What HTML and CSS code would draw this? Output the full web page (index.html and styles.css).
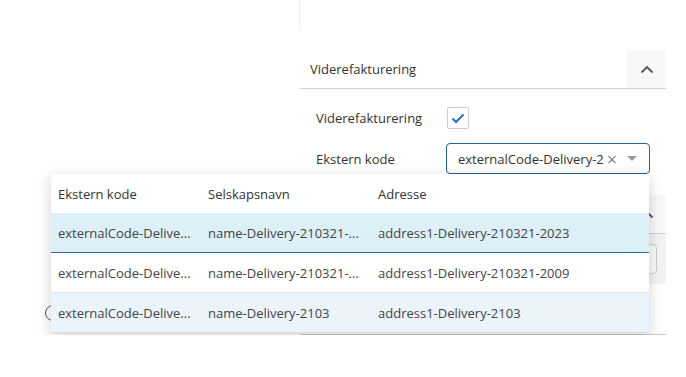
FILE: index.html
```html
<!DOCTYPE html>
<html lang="no">
<head>
    <meta charset="UTF-8">
    <title>Viderefakturering</title>
    <link rel="stylesheet" href="styles.css">
</head>
<body>
    <div class="page">
        <div class="venstre">
            <label class="radio"><span class="sirkel"></span></label>
        </div>

        <div class="hoyre">
            <div class="topp"></div>

            <div class="seksjon">
                <div class="seksjon-hode">
                    <span class="tittel">Viderefakturering</span>
                    <button class="kollaps" type="button">
                        <svg width="14" height="9" viewBox="0 0 14 9"><path d="M1.5 7.5 L7 2 L12.5 7.5" fill="none" stroke="#555" stroke-width="1.8"/></svg>
                    </button>
                </div>
                <div class="skjema">
                    <div class="rad">
                        <label>Viderefakturering</label>
                        <span class="avkrysning">
                            <svg width="14" height="11" viewBox="0 0 14 11"><path d="M1.5 5.5 L5 9 L12.5 1.5" fill="none" stroke="#2d6fb7" stroke-width="2"/></svg>
                        </span>
                    </div>
                    <div class="rad">
                        <label>Ekstern kode</label>
                        <div class="velger">
                            <span class="verdi">externalCode-Delivery-2</span>
                            <span class="fjern">&times;</span>
                            <span class="pil"></span>

                            <div class="nedtrekk">
                                <table>
                                    <thead>
                                        <tr>
                                            <th class="k1">Ekstern kode</th>
                                            <th class="k2">Selskapsnavn</th>
                                            <th>Adresse</th>
                                        </tr>
                                    </thead>
                                    <tbody>
                                        <tr class="valgt">
                                            <td>externalCode-Delive...</td>
                                            <td>name-Delivery-210321-...</td>
                                            <td>address1-Delivery-210321-2023</td>
                                        </tr>
                                        <tr>
                                            <td>externalCode-Delive...</td>
                                            <td>name-Delivery-210321-...</td>
                                            <td>address1-Delivery-210321-2009</td>
                                        </tr>
                                        <tr class="markert">
                                            <td>externalCode-Delive...</td>
                                            <td>name-Delivery-2103</td>
                                            <td>address1-Delivery-2103</td>
                                        </tr>
                                    </tbody>
                                </table>
                            </div>
                        </div>
                    </div>
                </div>
            </div>

            <div class="seksjon deaktivert">
                <div class="seksjon-hode">
                    <span class="tittel">Levering</span>
                    <button class="kollaps" type="button">
                        <svg width="14" height="9" viewBox="0 0 14 9"><path d="M1.5 7.5 L7 2 L12.5 7.5" fill="none" stroke="#555" stroke-width="1.8"/></svg>
                    </button>
                </div>
                <div class="skjema-felt">
                    <input type="text" class="felt">
                </div>
            </div>

            <div class="seksjon">
                <div class="seksjon-hode tom"></div>
            </div>
        </div>
    </div>
</body>
</html>
```

FILE: styles.css
```css
body {
    margin: 0;
    font-family: 'Open Sans', 'DejaVu Sans', sans-serif;
    font-size: 13px;
    color: #333;
    background-color: #fff;
}

.page {
    display: flex;
    width: 686px;
}

.venstre {
    width: 299px;
    padding-top: 305px;
    padding-left: 45px;
    box-sizing: border-box;
}

.radio .sirkel {
    display: block;
    width: 14px;
    height: 14px;
    border: 1px solid #555;
    border-radius: 50%;
}

.hoyre {
    width: 367px;
}

.topp {
    height: 30px;
    border-left: 1px solid #eee;
}

.seksjon {
    margin-left: 1px;
    margin-top: 20px;
}

.seksjon-hode {
    display: flex;
    align-items: center;
    justify-content: space-between;
    height: 38px;
    border-bottom: 1px solid #d3d3d3;
}

.seksjon-hode.tom {
    height: 37px;
    border-bottom-color: #ccc;
}

.tittel {
    padding-left: 10px;
    color: #333;
}

.kollaps {
    width: 39px;
    height: 38px;
    border: none;
    background-color: #f8f8f8;
    display: flex;
    align-items: center;
    justify-content: center;
    padding: 0;
}

.skjema {
    padding: 18px 16px 0 16px;
}

.rad {
    display: flex;
    align-items: center;
    margin-bottom: 14px;
}

.rad:last-child {
    margin-bottom: 0;
}

.rad label {
    width: 130px;
    color: #333;
}

.avkrysning {
    width: 20px;
    height: 20px;
    margin-left: 1px;
    border: 1px solid #ccc;
    border-radius: 2px;
    display: flex;
    align-items: center;
    justify-content: center;
}

.velger {
    position: relative;
    width: 204px;
    height: 31px;
    box-sizing: border-box;
    border: 1px solid #21609e;
    border-radius: 4px;
    display: flex;
    align-items: center;
    padding-left: 11px;
}

.verdi {
    color: #333;
    white-space: nowrap;
}

.fjern {
    color: #888;
    font-size: 18px;
    margin-left: 3px;
    line-height: 1;
}

.pil {
    margin-left: 10px;
    width: 0;
    height: 0;
    border-left: 5px solid transparent;
    border-right: 5px solid transparent;
    border-top: 5px solid #999;
}

.nedtrekk {
    position: absolute;
    top: 30px;
    right: 0;
    width: 598px;
    background-color: #fff;
    box-shadow: 0 4px 14px rgba(0, 0, 0, 0.18);
    z-index: 10;
}

.nedtrekk table {
    width: 100%;
    border-collapse: collapse;
}

.nedtrekk th,
.nedtrekk td {
    text-align: left;
    font-weight: normal;
    padding: 0 0 0 7px;
    white-space: nowrap;
}

.nedtrekk th {
    height: 39px;
    color: #333;
}

.nedtrekk td {
    height: 39px;
    color: #444;
    border-bottom: 1px solid #e6e6e6;
}

.nedtrekk .k1 {
    width: 143px;
}

.nedtrekk .k2 {
    width: 163px;
}

.nedtrekk tr.valgt td {
    background-color: #ddf0f7;
    border-bottom: 1px solid #2a679c;
}

.nedtrekk tr.markert td {
    background-color: #ebf4fa;
    border-bottom: 1px solid #d6dde2;
}

.deaktivert {
    margin-top: 21px;
    background-color: #f3f3f3;
}

.skjema-felt {
    padding: 10px 9px 10px 16px;
    display: flex;
    justify-content: flex-end;
}

.felt {
    width: 200px;
    height: 30px;
    box-sizing: border-box;
    border: 1px solid #ccc;
    border-radius: 4px;
    background-color: #fafafa;
}

.seksjon.deaktivert + .seksjon {
    margin-top: 13px;
}
```
